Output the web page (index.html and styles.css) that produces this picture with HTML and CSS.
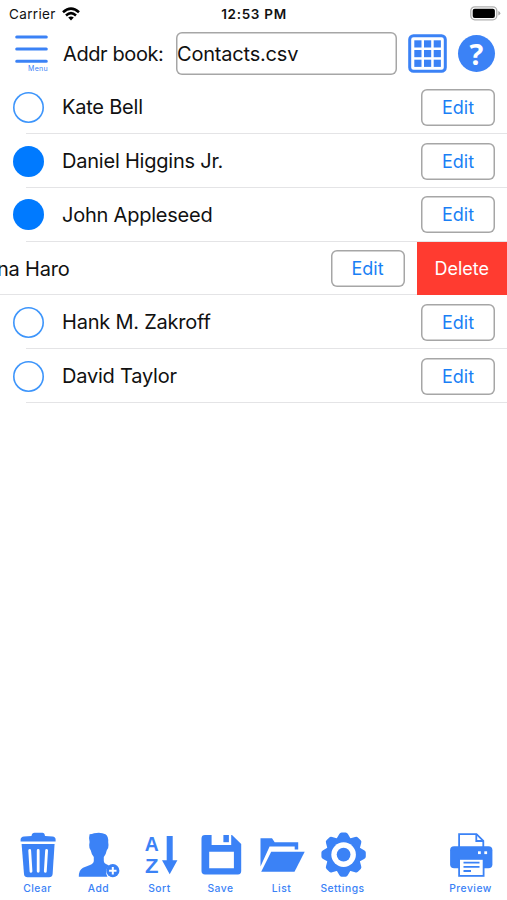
FILE: index.html
```html
<!DOCTYPE html>
<html lang="en">
<head>
  <meta charset="UTF-8" />
  <meta name="viewport" content="width=device-width, initial-scale=1.0"/>
  <title>Address book</title>
  <link rel="stylesheet" href="styles.css">
</head>
<body>
  <div class="status">
    <div class="carrier">
      <span>Carrier</span>
      <svg width="18" height="14" viewBox="0 0 18 14" fill="none" stroke="#000" stroke-width="2.6">
        <path d="M1 5.2 Q9 -2 17 5.2"/>
        <path d="M4 8.4 Q9 4 14 8.4"/>
        <path d="M9 13.5 L6.2 10.6 Q9 8.6 11.8 10.6 Z" fill="#000" stroke="none"/>
      </svg>
    </div>
    <span class="time">12:53 PM</span>
    <svg class="battery" width="31" height="15" viewBox="0 0 31 15">
      <rect x="0.8" y="0.8" width="26" height="13" rx="4" fill="#fff" stroke="#b0b0b0" stroke-width="1.3"/>
      <rect x="2.7" y="2.7" width="22.2" height="9.2" rx="2" fill="#000"/>
      <path d="M28.3 5 Q30.3 6 30.3 7.3 Q30.3 8.6 28.3 9.6 Z" fill="#a8a8a8"/>
    </svg>
  </div>

  <header class="header">
    <button class="menu">
      <svg width="33" height="28" viewBox="0 0 33 28" stroke="#3b82f6" stroke-width="3" stroke-linecap="round">
        <path d="M1.7 1.9 H31.3 M1.7 14.1 H31.3 M1.7 26.2 H31.3"/>
      </svg>
      <span>Menu</span>
    </button>
    <label class="book-label" for="book">Addr book:</label>
    <input class="book" id="book" type="text" value="Contacts.csv" />
    <button class="grid-btn">
      <svg width="39" height="39" viewBox="0 0 39 39">
        <rect x="1.7" y="1.7" width="35.6" height="35.6" rx="3.8" fill="#fff" stroke="#3b82f6" stroke-width="3"/>
        <g fill="#3b82f6">
          <rect x="6.3" y="6.3" width="7.2" height="7.2"/><rect x="16" y="6.3" width="7.2" height="7.2"/><rect x="25.7" y="6.3" width="7.2" height="7.2"/>
          <rect x="6.3" y="16" width="7.2" height="7.2"/><rect x="16" y="16" width="7.2" height="7.2"/><rect x="25.7" y="16" width="7.2" height="7.2"/>
          <rect x="6.3" y="25.7" width="7.2" height="7.2"/><rect x="16" y="25.7" width="7.2" height="7.2"/><rect x="25.7" y="25.7" width="7.2" height="7.2"/>
        </g>
      </svg>
    </button>
    <button class="help">?</button>
  </header>

  <ul class="contacts">
    <li class="row">
      <span class="check"></span>
      <span class="name">Kate Bell</span>
      <button class="edit">Edit</button>
    </li>
    <li class="row">
      <span class="check on"></span>
      <span class="name">Daniel Higgins Jr.</span>
      <button class="edit">Edit</button>
    </li>
    <li class="row">
      <span class="check on"></span>
      <span class="name">John Appleseed</span>
      <button class="edit">Edit</button>
    </li>
    <li class="row swiped">
      <span class="name">na Haro</span>
      <button class="edit">Edit</button>
      <button class="delete">Delete</button>
    </li>
    <li class="row">
      <span class="check"></span>
      <span class="name">Hank M. Zakroff</span>
      <button class="edit">Edit</button>
    </li>
    <li class="row">
      <span class="check"></span>
      <span class="name">David Taylor</span>
      <button class="edit">Edit</button>
    </li>
  </ul>

  <nav class="toolbar">
    <button class="tool">
      <svg viewBox="0 0 50 47">
        <path d="M7.6 10.6 V8.6 Q7.8 6 11 5.6 L18.5 5 Q19 1.8 21.5 1.8 H29.5 Q31.5 1.8 32 5 L39.5 5.6 Q42.6 6 42.6 8.6 V10.6 Z"/>
        <path d="M8.6 13 H41.6 L39.6 43 Q39.2 46.2 36 46.2 H14.6 Q11.3 46.2 11 43 Z"/>
        <path d="M16.7 19.5 L18 40.3 M25.2 19.5 V40.3 M33.6 19.5 L32.3 40.3" stroke="#fff" stroke-width="2.8" stroke-linecap="round"/>
      </svg>
      <span>Clear</span>
    </button>
    <button class="tool">
      <svg viewBox="0 0 50 47">
        <path d="M15.6 3.2 Q18 3 20 2.2 Q27 0.8 31.5 3.2 Q34.6 5.5 34.2 11 L34.5 14 Q34.6 18 32.7 19.5 Q32 23.5 29.8 26 V30 Q30 32.5 33.5 33.8 L35 34.5 Q30 39.5 33.5 45.8 H4.8 Q4.8 39 9 36.8 L16 34 Q19.6 32.5 19.8 30 V26 Q17.5 23.5 16.8 19.5 Q15 18 15.2 14 L15.6 11 Q14.5 7 15.6 3.2 Z"/>
        <circle cx="38.8" cy="39.7" r="6.6"/>
        <path d="M38.8 36 V43.4 M35.1 39.7 H42.5" stroke="#fff" stroke-width="2"/>
      </svg>
      <span>Add</span>
    </button>
    <button class="tool">
      <svg viewBox="0 0 50 47">
        <text class="az" x="16.8" y="20.2" textLength="14" lengthAdjust="spacingAndGlyphs">A</text>
        <text class="az" x="16.8" y="42" textLength="13.5" lengthAdjust="spacingAndGlyphs">Z</text>
        <path d="M31.7 5 H37.7 V29.2 H42.4 L34.7 43.2 L27 29.2 H31.7 Z"/>
      </svg>
      <span>Sort</span>
    </button>
    <button class="tool">
      <svg viewBox="0 0 50 47">
        <path fill-rule="evenodd" d="M9 4 H15.6 V14 H35.2 V4 H36 L45.2 13 V40 Q45.2 43.4 42 43.4 H9 Q5.5 43.4 5.5 40 V7.4 Q5.5 4 9 4 Z M13.2 20.7 V37.2 H37.9 V20.7 Z"/>
        <rect x="27.4" y="4" width="5.5" height="7.2"/>
      </svg>
      <span>Save</span>
    </button>
    <button class="tool">
      <svg viewBox="0 0 50 47">
        <path d="M3.5 7.2 H15 L17.7 11.3 H41.2 V18.4 H37.7 V15.4 H12.6 L3.5 35.5 Z"/>
        <path d="M14.2 20.8 H47.7 L37.5 40.8 H4.2 Z"/>
      </svg>
      <span>List</span>
    </button>
    <button class="tool">
      <svg viewBox="0 0 50 47">
        <g transform="translate(25.6 23.6)">
          <circle r="17.2"/>
          <g id="teeth">
            <path id="tooth" d="M-7.5 -15 L-4.3 -20.5 Q-3.6 -22.2 -2 -22.2 H2 Q3.6 -22.2 4.3 -20.5 L7.5 -15 Z"/>
            <use href="#tooth" transform="rotate(45)"/>
            <use href="#tooth" transform="rotate(90)"/>
            <use href="#tooth" transform="rotate(135)"/>
          </g>
          <use href="#teeth" transform="rotate(180)"/>
          <circle r="12.3" fill="#fff"/>
          <circle r="6.9"/>
        </g>
      </svg>
      <span>Settings</span>
    </button>
    <button class="tool preview">
      <svg viewBox="0 0 50 47">
        <path d="M13.1 17 V3.1 H30.5 L37.3 9.8 V17" fill="#fff" stroke="#3b82f6" stroke-width="1.8"/>
        <path d="M30.3 3 V10 H37.4" fill="none" stroke="#3b82f6" stroke-width="1.8"/>
        <rect x="4.1" y="15.2" width="42.3" height="22" rx="4"/>
        <rect x="32" y="20.3" width="2.8" height="2.8" fill="#fff"/>
        <rect x="38.3" y="20.3" width="2.8" height="2.8" fill="#fff"/>
        <rect x="13.1" y="27.9" width="24.5" height="17" fill="#fff" stroke="#3b82f6" stroke-width="1.8"/>
        <path d="M17.5 31.6 H33.5 M17.5 35.8 H33.5 M17.5 40 H25" stroke="#3b82f6" stroke-width="1.8"/>
      </svg>
      <span>Preview</span>
    </button>
  </nav>
</body>
</html>
```

FILE: styles.css
```css
* {
  box-sizing: border-box;
}

body {
  margin: 0;
  height: 900px;
  display: flex;
  flex-direction: column;
  overflow: hidden;
  background: #fff;
  color: #111;
  font-family: "Inter", "Liberation Sans", sans-serif;
}

button {
  padding: 0;
  border: none;
  background: none;
  font-family: inherit;
  cursor: pointer;
}

svg {
  display: block;
}

.status {
  display: grid;
  grid-template-columns: 1fr auto 1fr;
  align-items: center;
  height: 27px;
  padding: 0 6px 0 9px;
  font-size: 13.5px;
}

.carrier {
  display: flex;
  align-items: center;
  gap: 6px;
  letter-spacing: 0.35px;
}

.time {
  margin-right: 2px;
  font-weight: 600;
  letter-spacing: 0.7px;
}

.battery {
  justify-self: end;
}

.header {
  display: flex;
  align-items: center;
  height: 53px;
  padding: 0 12px 0 15px;
}

.menu {
  width: 33px;
  height: 38px;
  color: #3b82f6;
}

.menu span {
  display: block;
  padding-top: 1px;
  font-size: 7px;
  line-height: 9px;
  text-align: right;
  letter-spacing: 0.3px;
}

.book-label {
  width: 113px;
  margin-left: 15px;
  font-size: 20px;
  letter-spacing: -0.4px;
  white-space: nowrap;
}

.book {
  width: 221px;
  height: 43px;
  padding: 0 1px;
  border: none;
  border-radius: 6px;
  box-shadow: inset 0 0 0 1.5px #a6a6a6;
  color: #111;
  font-family: inherit;
  font-size: 20px;
  letter-spacing: -0.2px;
}

.grid-btn {
  margin-left: 11px;
}

.help {
  width: 37px;
  height: 37px;
  margin-left: 11px;
  border-radius: 50%;
  background: #3b82f6;
  color: #fff;
  font-family: "Open Sans", sans-serif;
  font-size: 29px;
  font-weight: 700;
  line-height: 37px;
}

.contacts {
  margin: 0;
  padding: 0.4px 0 0;
  list-style: none;
}

.row {
  display: flex;
  align-items: center;
  height: 53.75px;
  padding: 0 12px 0 13px;
  background: linear-gradient(#e4e4e6, #e4e4e6) 26px 100% / 100% 1px no-repeat;
}

.check {
  width: 31px;
  height: 31px;
  margin-right: 18px;
  border-radius: 50%;
  box-shadow: inset 0 0 0 1.6px #3d95fb;
}

.check.on {
  background: #007aff;
  box-shadow: none;
}

.name {
  flex: 1;
  font-size: 20px;
  letter-spacing: -0.22px;
}

.edit {
  width: 74px;
  height: 37px;
  border-radius: 6px;
  box-shadow: inset 0 0 0 1.5px #a6a6a6;
  color: #1a7ff5;
  font-size: 18px;
}

.swiped {
  padding: 0;
  background-position: 0 100%;
}

.swiped .name {
  margin-left: -3px;
}

.delete {
  align-self: stretch;
  width: 90.5px;
  margin-left: 12px;
  background: #ff3b30;
  color: #fff;
  font-size: 18px;
}

.toolbar {
  display: flex;
  height: 69px;
  margin-top: auto;
  padding: 0 6px 0 7px;
}

.tool {
  display: flex;
  flex-direction: column;
  align-items: center;
  width: 61px;
  color: #3b82f6;
}

.tool svg {
  width: 50px;
  height: 47px;
  fill: #3b82f6;
}

.tool span {
  margin-top: 4px;
  font-size: 10.3px;
  font-weight: 500;
  line-height: 13px;
  letter-spacing: 0.5px;
}

.az {
  font-family: "Liberation Sans", sans-serif;
  font-size: 19.5px;
  font-weight: 700;
  text-anchor: middle;
}

.preview {
  margin-left: auto;
}
```
